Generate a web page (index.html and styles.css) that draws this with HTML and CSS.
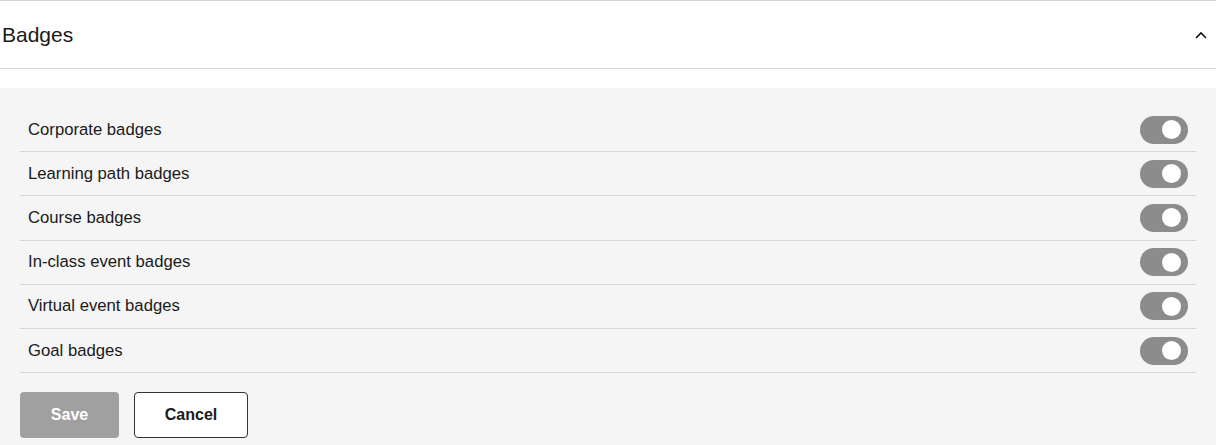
FILE: index.html
```html
<!DOCTYPE html>
<html lang="en">
<head>
    <meta charset="UTF-8">
    <title>Badges</title>
    <link rel="stylesheet" href="styles.css">
</head>
<body>
    <section class="settings-section">
        <div class="section-header">
            <h2>Badges</h2>
            <button class="collapse-btn" aria-label="Collapse">
                <svg width="12" height="8" viewBox="0 0 12 8">
                    <path d="M1 7 L6 2 L11 7" fill="none" stroke="#111" stroke-width="1.6"/>
                </svg>
            </button>
        </div>

        <div class="section-body">
            <ul class="toggle-list">
                <li class="toggle-row">
                    <span>Corporate badges</span>
                    <span class="switch on"></span>
                </li>
                <li class="toggle-row">
                    <span>Learning path badges</span>
                    <span class="switch on"></span>
                </li>
                <li class="toggle-row">
                    <span>Course badges</span>
                    <span class="switch on"></span>
                </li>
                <li class="toggle-row">
                    <span>In-class event badges</span>
                    <span class="switch on"></span>
                </li>
                <li class="toggle-row">
                    <span>Virtual event badges</span>
                    <span class="switch on"></span>
                </li>
                <li class="toggle-row">
                    <span>Goal badges</span>
                    <span class="switch on"></span>
                </li>
            </ul>

            <div class="actions">
                <button class="btn btn-save" disabled>Save</button>
                <button class="btn btn-cancel">Cancel</button>
            </div>
        </div>
    </section>
</body>
</html>
```

FILE: styles.css
```css
body {
    margin: 0;
    font-family: 'Liberation Sans', Arial, sans-serif;
    color: #1a1a1a;
    background: white;
}
.settings-section {
    border-top: 1px solid #d6d6d6;
}
.section-header {
    height: 67px;
    display: flex;
    justify-content: space-between;
    align-items: center;
    padding: 0 9px 0 2px;
    border-bottom: 1px solid #d6d6d6;
}
.section-header h2 {
    margin: 0;
    font-size: 21px;
    font-weight: normal;
    color: #1a1a1a;
}
.collapse-btn {
    background: none;
    border: none;
    padding: 0;
    cursor: pointer;
    display: flex;
}
.section-body {
    margin-top: 19px;
    background-color: #f5f5f5;
    padding: 20px 20px 8px;
}
.toggle-list {
    list-style: none;
    margin: 0;
    padding: 0;
}
.toggle-row {
    height: 43.2px;
    display: flex;
    justify-content: space-between;
    align-items: center;
    padding: 0 8px;
    border-bottom: 1px solid #d6d6d6;
    font-size: 16.7px;
}
.switch {
    width: 48px;
    height: 28px;
    border-radius: 14px;
    background-color: #8c8c8c;
    display: flex;
    align-items: center;
    justify-content: flex-end;
    padding-right: 7px;
    box-sizing: border-box;
}
.switch::after {
    content: "";
    width: 19px;
    height: 19px;
    border-radius: 50%;
    background: white;
}
.actions {
    display: flex;
    gap: 15px;
    margin-top: 19px;
}
.btn {
    height: 46px;
    border-radius: 4px;
    font-family: 'Liberation Sans', Arial, sans-serif;
    font-size: 16px;
    font-weight: bold;
    cursor: pointer;
}
.btn-save {
    width: 99px;
    background-color: #a0a0a0;
    color: white;
    border: none;
}
.btn-cancel {
    width: 114px;
    background-color: white;
    color: #1a1a1a;
    border: 1px solid #333;
}
```
